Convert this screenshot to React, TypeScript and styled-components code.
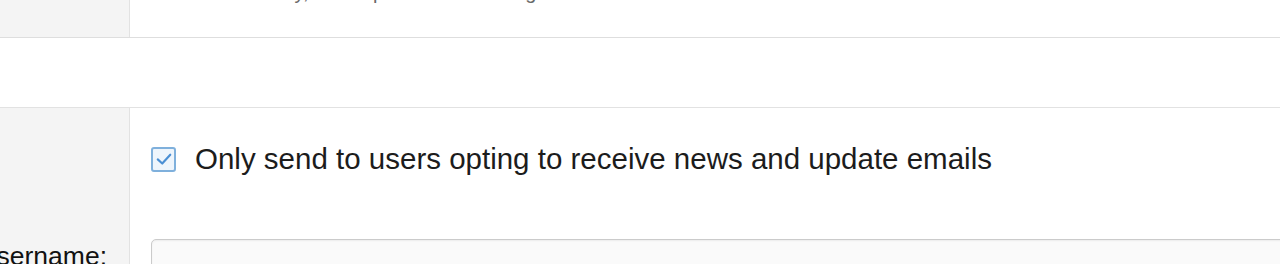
import React, { useState } from 'react';
import styled, { createGlobalStyle } from 'styled-components';

const GlobalStyle = createGlobalStyle`
  html, body {
    margin: 0;
    padding: 0;
    background: #ffffff;
    overflow: hidden;
  }
  body {
    font-family: "Liberation Sans", Arial, Helvetica, sans-serif;
    color: #1a1a1a;
  }
`;

// the page is scrolled down a little, so the first row is cut off at the top
const Page = styled.div`
  margin-top: -40px;
  width: calc(100% + 40px);
`;

const Section = styled.div`
  display: grid;
  grid-template-columns: 130px 1fr;
  border-bottom: 1px solid #dedede;
`;

const Spacer = styled.div`
  height: 69px;
  border-bottom: 1px solid #e2e2e2;
`;

const LabelCell = styled.div`
  background: #f4f4f4;
  border-right: 1px solid #e2e2e2;
  display: flex;
  flex-direction: column;
`;

const FieldCell = styled.div`
  display: flex;
  flex-direction: column;
`;

const Label = styled.label<{ $padTop: number }>`
  display: flex;
  justify-content: flex-end;
  white-space: nowrap;
  padding: ${({ $padTop }) => $padTop}px 22px 0 0;
  font-size: 26.5px;
  line-height: 32px;
  color: #111111;
`;

const LabelSlot = styled.div<{ $height: number }>`
  height: ${({ $height }) => $height}px;
`;

const Hint = styled.p`
  margin: 0;
  padding: 20px 21px 33px;
  font-size: 20px;
  line-height: 24px;
  color: #6a6a6a;
`;

const CheckRow = styled.label`
  display: flex;
  align-items: center;
  gap: 19px;
  height: 95px;
  box-sizing: border-box;
  padding: 34px 0 27px 21px;
  font-size: 29.5px;
  line-height: 34px;
  color: #1c1c1c;
  cursor: pointer;
`;

const Box = styled.span<{ $checked: boolean }>`
  width: 25px;
  height: 25px;
  box-sizing: border-box;
  flex: none;
  border: 2px solid #7fb0dc;
  border-radius: 3px;
  background: #eef5fc;
  display: flex;
  align-items: center;
  justify-content: center;
  svg {
    visibility: ${({ $checked }) => ($checked ? 'visible' : 'hidden')};
  }
`;

const InputRow = styled.div`
  padding: 36px 0 30px 21px;
`;

const TextInput = styled.input`
  display: block;
  width: 100%;
  height: 50px;
  box-sizing: border-box;
  border: 1px solid #cbcbcb;
  border-radius: 5px;
  background: #fafafa;
  box-shadow: inset 0 1px 2px rgba(0, 0, 0, 0.06);
  font: inherit;
  font-size: 24px;
  padding: 0 14px;
`;

const App: React.FC = () => {
  const [optIn, setOptIn] = useState(true);

  return (
    <>
      <GlobalStyle />
      <Page>
        <Section>
          <LabelCell />
          <FieldCell>
            <Hint>Sent immediately, so keep the text to a single line.</Hint>
          </FieldCell>
        </Section>

        <Spacer />

        <Section>
          <LabelCell>
            <LabelSlot $height={95} />
            <Label htmlFor="username" $padTop={37}>Username:</Label>
          </LabelCell>
          <FieldCell>
            <CheckRow onClick={() => setOptIn(v => !v)}>
              <Box $checked={optIn}>
                <svg width="20" height="20" viewBox="0 0 16 16" fill="none">
                  <path d="M3 8.3 L6.6 11.6 L13 4.6" stroke="#4a8fd4" strokeWidth="1.7" strokeLinecap="round" strokeLinejoin="round" />
                </svg>
              </Box>
              Only send to users opting to receive news and update emails
            </CheckRow>
            <InputRow>
              <TextInput id="username" type="text" />
            </InputRow>
          </FieldCell>
        </Section>
      </Page>
    </>
  );
};

export default App;
